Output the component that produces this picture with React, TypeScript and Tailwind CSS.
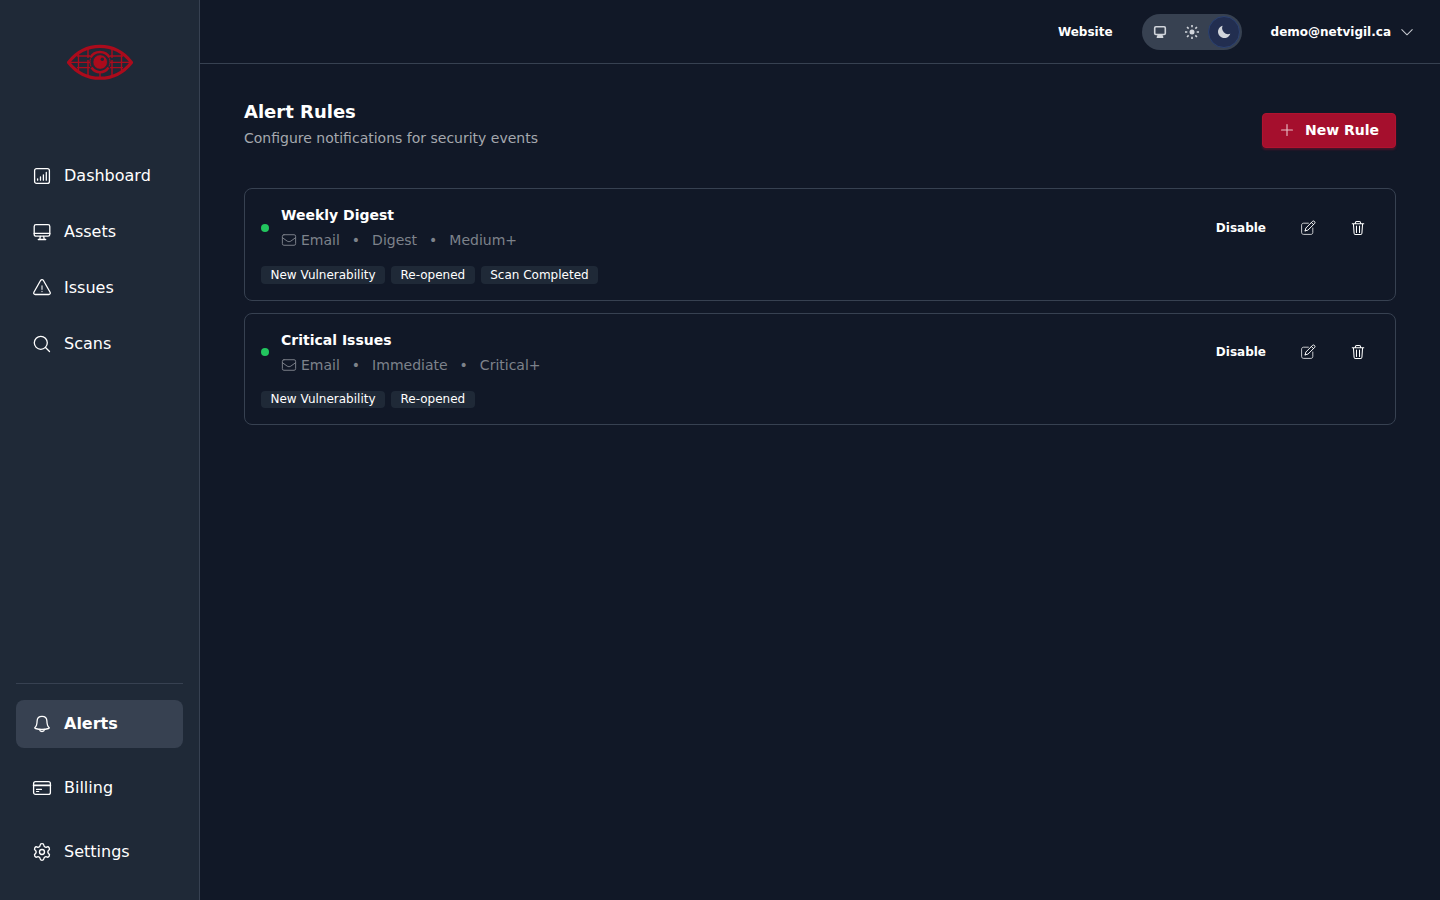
import type { ReactNode } from "react";
import { Settings } from "lucide-react";

interface IconProps {
    className?: string;
    strokeWidth?: number;
    children?: ReactNode;
}

interface Rule {
    name: string;
    channel: string;
    frequency: string;
    severity: string;
    events: string[];
}

const rules: Rule[] = [
    {
        name: "Weekly Digest",
        channel: "Email",
        frequency: "Digest",
        severity: "Medium+",
        events: ["New Vulnerability", "Re-opened", "Scan Completed"],
    },
    {
        name: "Critical Issues",
        channel: "Email",
        frequency: "Immediate",
        severity: "Critical+",
        events: ["New Vulnerability", "Re-opened"],
    },
];

function Icon({ className = "size-5", strokeWidth = 1.3, children }: IconProps) {
    return (
        <svg
            viewBox="0 0 20 20"
            fill="none"
            stroke="currentColor"
            strokeWidth={strokeWidth}
            strokeLinecap="round"
            strokeLinejoin="round"
            className={`shrink-0 ${className}`}
        >
            {children}
        </svg>
    );
}

const DashboardIcon = () => (
    <Icon>
        <rect x="2.6" y="2.6" width="14.8" height="14.8" rx="2" />
        <path d="M5.6 14.2v-1.4M8.5 14.2v-3.4M11.4 14.2V8.8M14.3 14.2V6.4" />
    </Icon>
);

const AssetsIcon = () => (
    <Icon>
        <rect x="2.2" y="2.6" width="15.6" height="11.6" rx="1.8" />
        <path d="M2.2 11.4h15.6M8.3 14.4l-.5 3M11.7 14.4l.5 3M6.3 17.5h7.4" />
    </Icon>
);

const IssuesIcon = () => (
    <Icon>
        <path d="M8.7 2.3 1.9 14.2C1.3 15.3 2 16.5 3.2 16.5H16.8C18 16.5 18.7 15.3 18.1 14.2L11.3 2.3C10.7 1.3 9.3 1.3 8.7 2.3Z" />
        <path d="M10 7.8v3.5M10 13.3v.2" opacity="0.8" />
    </Icon>
);

const ScansIcon = () => (
    <Icon>
        <circle cx="8.8" cy="8.8" r="6.5" />
        <path d="m13.5 13.5 4 4" />
    </Icon>
);

const BellIcon = () => (
    <Icon>
        <path d="M10 2.3c-2.9 0-4.8 2-4.9 4.7-.1 4-.6 5.2-2 6.2-.6.4-.4 1.1.3 1.3 4.2 1.1 9 1.1 13.2 0 .7-.2.9-.9.3-1.3-1.4-1-1.9-2.2-2-6.2-.1-2.7-2-4.7-4.9-4.7Z" />
        <path d="M7.4 15.4c.3 1.3 1.3 2.1 2.6 2.1s2.3-.8 2.6-2.1" />
    </Icon>
);

const BillingIcon = () => (
    <Icon>
        <rect x="1.6" y="3.6" width="16.8" height="12.8" rx="2" />
        <path d="M1.6 7.3h16.8" strokeWidth="1.7" />
        <path d="M4.5 11.4h5M4.5 13.5h2.3" strokeWidth="1.1" />
    </Icon>
);

const MailIcon = () => (
    <Icon className="size-4" strokeWidth={1.2}>
        <rect x="1.7" y="3.4" width="16.6" height="13.2" rx="2" />
        <path d="m1.9 7.2 5.8 4.2c1.4.9 3.2.9 4.6 0l5.8-4.2" />
    </Icon>
);

const EditIcon = () => (
    <Icon className="size-4" strokeWidth={1.2}>
        <path
            d="M10.5 4H4.4C3.1 4 2 5 2 6.4v9.2C2 17 3.1 18 4.4 18h9.2c1.4 0 2.4-1 2.4-2.4V10"
            opacity="0.8"
        />
        <path d="m6.5 13.5.8-3.4 8.5-8.5c1.5-1.3 3.9 1.1 2.6 2.6l-8.5 8.5-3.4.8ZM14.3 3.2l2.5 2.5" />
    </Icon>
);

const TrashIcon = () => (
    <Icon className="size-4" strokeWidth={1.3}>
        <path d="M2.8 4.6h14.4M6.7 4.5V3.6c0-1.1.7-1.8 1.7-1.8h3.2c1 0 1.7.7 1.7 1.8v.9M4.3 5l.8 11.5c.1 1 .9 1.7 1.8 1.7h6.2c1 0 1.7-.7 1.8-1.7L15.7 5M8.1 7.5v8M11.9 7.5v8" />
    </Icon>
);

function Logo() {
    return (
        <svg viewBox="0 0 66 36" className="h-9 w-[66px]" fill="none" stroke="#ab0b1c">
            <path
                d="M1.5 18.4C10 7.5 21 2.4 33 2.4S56 7.5 64.5 18.4C56 29.2 45 34.2 33 34.2S10 29.2 1.5 18.4Z"
                strokeWidth="3.2"
                strokeLinejoin="round"
            />
            <path
                d="M2 18.4h21M43 18.4h21M10 12h13M43 12h13M10 23.6h13M43 23.6h13M11.5 9v18M21 5v9M21 16v15M45 5v9M45 16v15M54.5 9v18M33 28v6"
                strokeWidth="1.4"
            />
            <path
                d="M23.5 13.5c2-3.7 5.5-5.5 9.5-5.5s7.5 1.8 9.5 5.5M24.5 23.5c2 3 5 4.7 8.5 4.7s6.5-1.7 8.5-4.7"
                strokeWidth="2.6"
            />
            <path d="M23.5 14.5c-.8 2.7-.6 5.5.5 8M42.5 14.5c.8 2.7.6 5.5-.5 8" strokeWidth="1" />
            <circle cx="33.2" cy="18" r="7.3" fill="#ab0b1c" stroke="#1f2937" strokeWidth="0.8" />
            <circle cx="35.3" cy="15.2" r="1.7" fill="#1f2937" stroke="none" />
        </svg>
    );
}

function NavItem({ icon, label, active }: { icon: ReactNode; label: string; active?: boolean }) {
    return (
        <a
            className={`flex h-12 items-center gap-3 rounded-lg px-4 text-base text-white ${
                active ? "bg-[#374151] font-bold" : ""
            }`}
        >
            {icon}
            {label}
        </a>
    );
}

function Sidebar() {
    return (
        <aside className="flex w-[200px] shrink-0 flex-col border-r border-[#374151] bg-[#1f2937] px-4">
            <div className="flex h-[124px] items-center justify-center">
                <Logo />
            </div>
            <nav className="mt-7 flex flex-1 flex-col gap-2">
                <NavItem icon={<DashboardIcon />} label="Dashboard" />
                <NavItem icon={<AssetsIcon />} label="Assets" />
                <NavItem icon={<IssuesIcon />} label="Issues" />
                <NavItem icon={<ScansIcon />} label="Scans" />
            </nav>
            <nav className="mb-6 flex flex-col gap-4 border-t border-[#374151] pt-4">
                <NavItem icon={<BellIcon />} label="Alerts" active />
                <NavItem icon={<BillingIcon />} label="Billing" />
                <NavItem icon={<Settings size={20} strokeWidth={1.6} />} label="Settings" />
            </nav>
        </aside>
    );
}

function ThemeSwitch() {
    return (
        <div className="flex h-9 w-[100px] items-center rounded-full bg-[#374151] pl-0.5 text-[#d1d5db]">
            <span className="flex size-8 items-center justify-center">
                <svg viewBox="0 0 16 16" className="size-4" fill="currentColor">
                    <rect x="2.7" y="2.7" width="10.6" height="7.8" rx="1.2" fill="none" stroke="currentColor" strokeWidth="1.6" />
                    <path d="M5.5 11h5l.9 2.2c.1.4-.1.8-.5.8H5.1c-.4 0-.6-.4-.5-.8L5.5 11Z" />
                </svg>
            </span>
            <span className="flex size-8 items-center justify-center">
                <svg viewBox="0 0 16 16" className="size-4" fill="currentColor" stroke="currentColor" strokeWidth="1.6">
                    <circle cx="8" cy="8" r="2.5" stroke="none" />
                    <path d="M8 1v2.3M8 12.7V15M1 8h2.3M12.7 8H15M3.05 3.05l1.6 1.6M11.35 11.35l1.6 1.6M3.05 12.95l1.6-1.6M11.35 4.65l1.6-1.6" />
                </svg>
            </span>
            <span className="flex size-8 items-center justify-center rounded-full border border-[#2b4170] bg-[#222e50]">
                <svg viewBox="0 0 16 16" className="size-4" fill="currentColor">
                    <path d="M6.7 1.7A6.3 6.3 0 1 0 14.3 9.8 6 6 0 0 1 6.7 1.7Z" />
                </svg>
            </span>
        </div>
    );
}

function Header() {
    return (
        <header className="flex h-16 shrink-0 items-center justify-end border-b border-[#374151] pr-[25px] text-xs font-bold text-white">
            <a>Website</a>
            <div className="mx-[29px]">
                <ThemeSwitch />
            </div>
            <button className="flex items-center gap-2">
                demo@netvigil.ca
                <Icon className="size-4 text-[#c4c7cd]">
                    <path d="m3.5 7 6.5 6.5L16.5 7" />
                </Icon>
            </button>
        </header>
    );
}

function RuleCard({ rule }: { rule: Rule }) {
    return (
        <article className="rounded-lg border border-[#374151] p-4">
            <div className="flex items-center justify-between">
                <div className="flex items-center gap-3">
                    <span className="size-2 rounded-full bg-[#22c55e]" />
                    <div>
                        <h2 className="text-sm font-bold text-white">{rule.name}</h2>
                        <div className="mt-[5px] flex items-center gap-3 text-sm text-[#7d828b]">
                            <span className="flex items-center gap-1">
                                <MailIcon />
                                {rule.channel}
                            </span>
                            <span>•</span>
                            <span>{rule.frequency}</span>
                            <span>•</span>
                            <span>{rule.severity}</span>
                        </div>
                    </div>
                </div>
                <div className="flex items-center text-xs font-bold text-white">
                    <button>Disable</button>
                    <button className="ml-[34px]">
                        <EditIcon />
                    </button>
                    <button className="mr-[13px] ml-[34px]">
                        <TrashIcon />
                    </button>
                </div>
            </div>
            <div className="mt-4 flex gap-1.5">
                {rule.events.map((event) => (
                    <span
                        key={event}
                        className="h-[17.5px] rounded bg-[#1f2937] px-[9.5px] pt-[0.8px] text-xs leading-4 text-white"
                    >
                        {event}
                    </span>
                ))}
            </div>
        </article>
    );
}

export default function App() {
    return (
        <div className="flex h-screen overflow-hidden bg-[#111827] font-['DejaVu_Sans',sans-serif]">
            <Sidebar />
            <div className="flex flex-1 flex-col">
                <Header />
                <main className="flex-1 px-11 pt-[34px]">
                    <div className="flex items-center justify-between">
                        <div>
                            <h1 className="text-lg font-bold text-white">Alert Rules</h1>
                            <p className="text-sm leading-6 text-[#a5a8ae]">
                                Configure notifications for security events
                            </p>
                        </div>
                        <button className="mt-[13px] flex h-[35px] items-center gap-2.5 rounded border border-[#b0132f] bg-[#a50f2d] px-4 pb-px text-sm font-bold text-white shadow-[0_2px_2px_rgba(165,15,45,0.35)]">
                            <Icon className="size-4 text-[#e8c0c8]" strokeWidth={1.4}>
                                <path d="M10 3.2v13.6M3.2 10h13.6" />
                            </Icon>
                            New Rule
                        </button>
                    </div>
                    <div className="mt-[38px] flex flex-col gap-3">
                        {rules.map((rule) => (
                            <RuleCard key={rule.name} rule={rule} />
                        ))}
                    </div>
                </main>
            </div>
        </div>
    );
}
